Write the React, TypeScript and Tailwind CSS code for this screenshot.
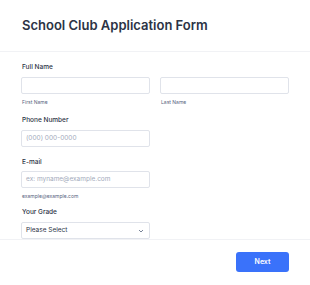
import React from "react";

export default function App() {
  return (
    <div className="w-[310px] h-[285px] bg-white overflow-hidden text-[#2c3345]" style={{ fontFamily: "Inter, 'Noto Sans', sans-serif" }}>
      <div className="h-[52px] px-[22px] flex items-center border-b border-[#f1f2f5]">
        <h1 className="text-[13px] leading-[18px] font-semibold text-[#2c3345] mt-[-1px]">School Club Application Form</h1>
      </div>
      <div className="px-[21px] pt-[11px] h-[188px] border-b border-[#f1f2f5]">
        <div className="text-[6.5px] leading-[9px] font-medium px-[1px]">Full Name</div>
        <div className="flex gap-[10px] mt-[5px]">
          <div className="flex flex-col">
            <div className="w-[129px] h-[17px] border border-[#e0e3ea] rounded-[2px] bg-white"></div>
            <div className="text-[5px] leading-[6px] mt-[5px] text-[#57647e] px-[1px]">First Name</div>
          </div>
          <div className="flex flex-col">
            <div className="w-[129px] h-[17px] border border-[#e0e3ea] rounded-[2px] bg-white"></div>
            <div className="text-[5px] leading-[6px] mt-[5px] text-[#57647e] px-[1px]">Last Name</div>
          </div>
        </div>
        <div className="text-[6.5px] leading-[9px] font-medium mt-[11px] px-[1px]">Phone Number</div>
        <div className="w-[129px] h-[17px] mt-[5px] border border-[#e0e3ea] rounded-[2px] flex items-center px-[4px] text-[6.5px] text-[#a3aabb]">(000) 000-0000</div>
        <div className="text-[6.5px] leading-[9px] font-medium mt-[11px] px-[1px]">E-mail</div>
        <div className="w-[129px] h-[17px] mt-[4px] border border-[#e0e3ea] rounded-[2px] flex items-center px-[4px] text-[6.5px] text-[#a3aabb]">ex: myname@example.com</div>
        <div className="text-[5px] leading-[6px] mt-[5px] text-[#57647e] px-[1px]">example@example.com</div>
        <div className="text-[6.5px] leading-[9px] font-medium mt-[9px] px-[1px]">Your Grade</div>
        <div className="w-[129px] h-[17px] mt-[5px] border border-[#e0e3ea] rounded-[2px] flex items-center justify-between px-[4px] text-[6.5px] text-[#2c3345]">
          <span>Please Select</span>
          <svg width="6" height="4" viewBox="0 0 6 4" fill="none" className="mr-[1px]">
            <path d="M1 1 L3 3 L5 1" stroke="#57647e" strokeWidth="0.8" />
          </svg>
        </div>
      </div>
      <div className="flex justify-end px-[21px] pt-[12px]">
        <button className="w-[53px] h-[20px] rounded-[3px] bg-[#3a72fa] text-white text-[7px] font-semibold flex items-center justify-center">Next</button>
      </div>
    </div>
  );
}
